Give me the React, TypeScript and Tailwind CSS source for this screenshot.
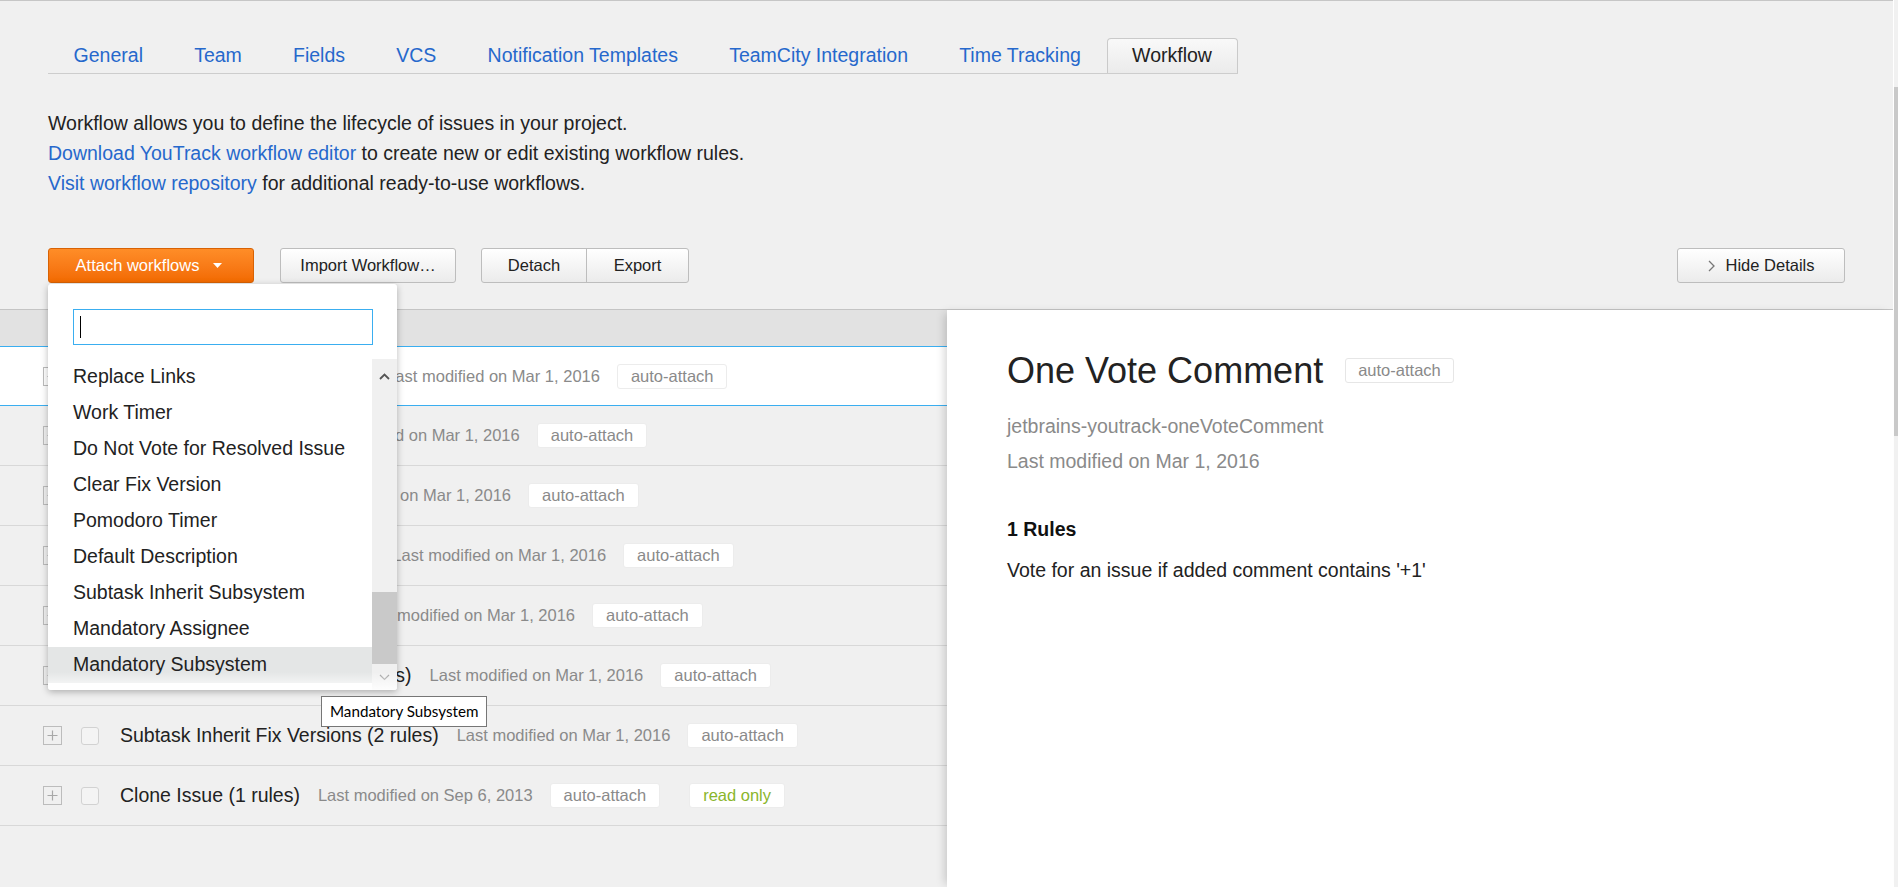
import React from "react";

const tabs = [
  "General",
  "Team",
  "Fields",
  "VCS",
  "Notification Templates",
  "TeamCity Integration",
  "Time Tracking",
  "Workflow",
];

const rows = [
  { name: "One Vote Comment (1 rules)", date: "Mar 1, 2016", selected: true },
  { name: "Duplicates (1 rules)", date: "Mar 1, 2016" },
  { name: "Due Date (1 rules)", date: "Mar 1, 2016" },
  { name: "Subtask Inherit Type (1 rules)", date: "Mar 1, 2016" },
  { name: "Default Assignee (1 rules)", date: "Mar 1, 2016" },
  { name: "Subtask Inherit Assignee (1 rules)", date: "Mar 1, 2016" },
  { name: "Subtask Inherit Fix Versions (2 rules)", date: "Mar 1, 2016" },
  { name: "Clone Issue (1 rules)", date: "Sep 6, 2013", readOnly: true },
];

const menuItems = [
  "Replace Links",
  "Work Timer",
  "Do Not Vote for Resolved Issue",
  "Clear Fix Version",
  "Pomodoro Timer",
  "Default Description",
  "Subtask Inherit Subsystem",
  "Mandatory Assignee",
  "Mandatory Subsystem",
];

const Tag: React.FC<{ children: React.ReactNode; green?: boolean }> = ({ children, green }) => (
  <span
    className={`h-[25px] px-[13px] flex items-center bg-white rounded-[3px] border border-[#ececec] text-[16.5px] ${
      green ? "text-[#8ab52c]" : "text-[#8a8a8a]"
    }`}
  >
    {children}
  </span>
);

const AttachDropdown: React.FC = () => (
  <div className="absolute left-0 top-[36px] w-[349px] h-[406px] bg-white rounded-[3px] shadow-[0_2px_7px_rgba(0,0,0,0.28)] z-30 flex flex-col">
    <div className="pt-[25px] px-[25px]">
      <div className="h-[36px] w-[300px] border border-[#3aaef0] flex items-center pl-[6px]">
        <span className="w-px h-[22px] bg-black" />
      </div>
    </div>

    {/* scrolled list */}
    <div className="mt-[14px] flex-1 flex relative overflow-hidden rounded-b-[3px]">
      <div className="flex-1 flex flex-col">
        {menuItems.map((item) => (
          <div
            key={item}
            className={`h-[36px] shrink-0 flex items-center pl-[25px] text-[19.5px] text-[#222] ${
              item === "Mandatory Subsystem" ? "bg-[#e4e6e6]" : ""
            }`}
          >
            {item}
          </div>
        ))}
      </div>
      <div className="w-[25px] bg-[#f0f0f0] flex flex-col">
        <div className="h-[34px] flex items-center justify-center">
          <svg width="11" height="7" viewBox="0 0 11 7">
            <polyline points="1,6 5.5,1.5 10,6" fill="none" stroke="#555" strokeWidth="1.8" />
          </svg>
        </div>
        <div className="flex-1" />
        <div className="h-[72px] bg-[#c9c9c9]" />
        <div className="h-[26px] flex items-center justify-center">
          <svg width="11" height="7" viewBox="0 0 11 7">
            <polyline points="1,1 5.5,5.5 10,1" fill="none" stroke="#9a9a9a" strokeWidth="1.2" />
          </svg>
        </div>
      </div>
      <div className="absolute left-0 right-0 bottom-0 h-[18px] bg-linear-to-b from-white/0 to-white/90" />
    </div>
  </div>
);

export default function App() {
  return (
    <div className="w-[1898px] h-[887px] overflow-hidden relative flex bg-[#f0f0f0] font-['Liberation_Sans',Arial,sans-serif] text-[#222]">
      <div className="flex-1 flex flex-col border-t border-[#c6c6c6]">
        {/* Tabs */}
        <div className="pl-[48px] pt-[37px]">
          <div className="flex items-end border-b border-[#cdcdcd] w-fit">
            {tabs.map((t) =>
              t === "Workflow" ? (
                <div
                  key={t}
                  className="h-[35px] px-[24.6px] flex items-center text-[19.5px] text-[#222] border border-b-0 border-[#cacaca] rounded-t-[4px] bg-linear-to-b from-[#f9f9f9] to-[#ebebeb]"
                >
                  {t}
                </div>
              ) : (
                <div key={t} className="h-[35px] px-[25.6px] flex items-center text-[19.5px] text-[#2668cc]">
                  {t}
                </div>
              )
            )}
          </div>
        </div>

        {/* Intro */}
        <div className="pl-[48px] mt-[34px] text-[19.5px] leading-[30px]">
          <p>Workflow allows you to define the lifecycle of issues in your project.</p>
          <p>
            <span className="text-[#2668cc]">Download YouTrack workflow editor</span> to create new or edit existing
            workflow rules.
          </p>
          <p>
            <span className="text-[#2668cc]">Visit workflow repository</span> for additional ready-to-use workflows.
          </p>
        </div>

        {/* Toolbar */}
        <div className="mt-[50px] px-[48px] flex items-center h-[35px] text-[16.5px] relative z-20">
          <div className="relative">
            <button className="h-[35px] w-[206px] flex items-center justify-center gap-[14px] pr-[4px] text-white rounded-[3px] border border-[#d86204] bg-linear-to-b from-[#ff8d27] to-[#f26a00]">
              Attach workflows
              <svg width="9" height="5" viewBox="0 0 9 5">
                <polygon points="0,0 9,0 4.5,5" fill="#fff" />
              </svg>
            </button>
            <AttachDropdown />
          </div>
          <button className="ml-[26px] h-[35px] w-[176px] flex items-center justify-center rounded-[3px] border border-[#bdbdbd] bg-linear-to-b from-white to-[#ebebeb]">
            Import Workflow…
          </button>
          <div className="ml-[25px] h-[35px] flex rounded-[3px] border border-[#bdbdbd] bg-linear-to-b from-white to-[#ebebeb]">
            <button className="w-[105px] flex items-center justify-center border-r border-[#bdbdbd]">Detach</button>
            <button className="w-[101px] flex items-center justify-center">Export</button>
          </div>
          <div className="flex-1" />
          <button className="h-[35px] w-[168px] flex items-center justify-center gap-[11px] rounded-[3px] border border-[#bdbdbd] bg-linear-to-b from-white to-[#ebebeb]">
            <svg width="7" height="12" viewBox="0 0 7 12">
              <polyline points="1,1 6,6 1,11" fill="none" stroke="#777" strokeWidth="1.3" />
            </svg>
            Hide Details
          </button>
        </div>

        {/* Content */}
        <div className="mt-[26px] flex-1 flex border-t border-[#c4c4c4]">
          {/* Workflow list */}
          <div className="w-[947px] flex flex-col">
            <div className="h-[36px] bg-[#e2e2e2]" />
            {rows.map((r) => (
              <div
                key={r.name}
                className={`h-[60px] shrink-0 flex items-center pl-[43px] ${
                  r.selected ? "bg-white border-y border-[#3aaef0]" : "border-b border-[#d8d8d8]"
                }`}
              >
                <span className="w-[19px] h-[19px] border border-[#bcbcbc] flex items-center justify-center">
                  <svg width="11" height="11" viewBox="0 0 11 11">
                    <path d="M5.5 0.5v10M0.5 5.5h10" stroke="#a8a8a8" strokeWidth="1.2" />
                  </svg>
                </span>
                <span className="ml-[19px] w-[18px] h-[18px] rounded-[3px] border border-[#d2d2d2] bg-[#f4f4f4]" />
                <span className="ml-[21px] text-[19.5px] text-[#222]">{r.name}</span>
                <span className="ml-[18px] text-[16.5px] text-[#8a8a8a]">Last modified on {r.date}</span>
                <span className="ml-[17px]">
                  <Tag>auto-attach</Tag>
                </span>
                {r.readOnly && (
                  <span className="ml-[29px]">
                    <Tag green>read only</Tag>
                  </span>
                )}
              </div>
            ))}
          </div>

          {/* Details panel */}
          <div className="flex-1 bg-white relative z-10 shadow-[-5px_0_9px_-3px_rgba(0,0,0,0.18)] pl-[60px] pt-[39px]">
            <div className="flex items-center h-[43px]">
              <h1 className="text-[36px] leading-[43px] text-[#222]">One Vote Comment</h1>
              <span className="ml-[22px] h-[25px] px-[12px] flex items-center rounded-[3px] border border-[#e6e6e6] text-[16.5px] text-[#8a8a8a]">
                auto-attach
              </span>
            </div>
            <div className="mt-[17px] text-[19.5px] leading-[35px] text-[#8a8a8a]">
              <p>jetbrains-youtrack-oneVoteComment</p>
              <p>Last modified on Mar 1, 2016</p>
            </div>
            <p className="mt-[35px] text-[19.5px] leading-[30px] font-bold text-[#111]">1 Rules</p>
            <p className="mt-[11px] text-[19.5px] leading-[30px] text-[#222]">
              Vote for an issue if added comment contains '+1'
            </p>
          </div>
        </div>
      </div>

      {/* page scrollbar */}
      <div className="w-[5px] bg-[#f1f1f1] border-l border-white flex flex-col">
        <div className="mt-[87px] h-[349px] bg-[#c9c9c9]" />
      </div>

      {/* native tooltip */}
      <div className="absolute left-[321px] top-[696px] h-[31px] px-[8px] flex items-center bg-white border border-[#767676] text-[15.2px] text-black font-['Lato',sans-serif] whitespace-nowrap z-40">
        Mandatory Subsystem
      </div>
    </div>
  );
}
